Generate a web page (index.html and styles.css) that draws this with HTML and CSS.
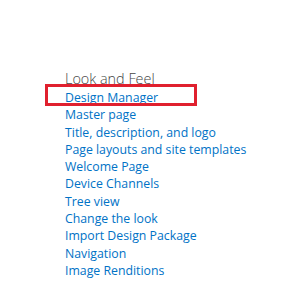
FILE: index.html
```html
<!DOCTYPE html>
<html lang="en">
<head>
    <meta charset="UTF-8">
    <title>Look and Feel</title>
    <link rel="stylesheet" href="styles.css">
</head>
<body>
    <div class="section">
        <div class="section-title">Look and Feel</div>
        <ul class="link-list">
            <li class="highlight"><a href="#">Design Manager</a></li>
            <li><a href="#">Master page</a></li>
            <li><a href="#">Title, description, and logo</a></li>
            <li><a href="#">Page layouts and site templates</a></li>
            <li><a href="#">Welcome Page</a></li>
            <li><a href="#">Device Channels</a></li>
            <li><a href="#">Tree view</a></li>
            <li><a href="#">Change the look</a></li>
            <li><a href="#">Import Design Package</a></li>
            <li><a href="#">Navigation</a></li>
            <li><a href="#">Image Renditions</a></li>
        </ul>
    </div>
</body>
</html>
```

FILE: styles.css
```css
* {
    margin: 0;
    padding: 0;
    box-sizing: border-box;
}

body {
    background: #fff;
    font-family: 'Open Sans', 'Segoe UI', sans-serif;
}

.section {
    padding: 69px 0 0 65px;
}

.section-title {
    font-size: 14.4px;
    font-weight: 300;
    line-height: 20px;
    color: #444;
}

.link-list {
    list-style: none;
}

.link-list li {
    font-size: 12.3px;
    line-height: 17.3px;
}

.link-list a {
    color: #0072c6;
    text-decoration: none;
}

/* red annotation box drawn over the first link */
.highlight {
    position: relative;
}

.highlight::after {
    content: '';
    position: absolute;
    top: -5px;
    left: -20px;
    width: 152px;
    height: 22px;
    border: 3px solid #e0202e;
    box-sizing: border-box;
}
```
